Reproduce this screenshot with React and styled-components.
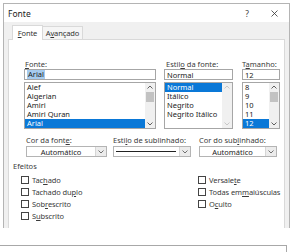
import styled, { createGlobalStyle } from "styled-components";

const GlobalStyle = createGlobalStyle`
  body {
    margin: 0;
    background: #fff;
    font-family: "Noto Sans", "Open Sans", sans-serif;
    color: #333;
  }
`

const Page = styled.div`
  width: 298px;
  height: 252px;
  overflow: hidden;
`

const Window = styled.div`
  box-sizing: border-box;
  width: 287px;
  height: 225px;
  margin: 3px 0 0 3px;
  border: 1px solid #b4b4b4;
  border-bottom: none;
  display: flex;
  flex-direction: column;
`

const TitleBar = styled.div`
  height: 18px;
  display: flex;
  align-items: center;
  padding: 0 10px 0 4px;
  background: #fff;
  font-size: 8.5px;
  color: #222;
`

const Title = styled.span`
  flex: 1;
`

const TitleButton = styled.span`
  width: 10px;
  display: flex;
  justify-content: center;
  margin-left: ${props => props.gap || 0}px;
  color: #444;
`

const Body = styled.div`
  flex: 1;
  background: #f0f0f0;
  padding: 3px 4px 0 4px;
  display: flex;
  flex-direction: column;
`

const TabRow = styled.div`
  display: flex;
  height: 15px;
  padding-left: 4px;
  margin-bottom: -1px;
  position: relative;
  z-index: 1;
`

const Tab = styled.div`
  box-sizing: border-box;
  width: ${props => props.width}px;
  height: ${props => props.active ? 15 : 14}px;
  margin-top: ${props => props.active ? 0 : 1}px;
  display: flex;
  align-items: center;
  justify-content: center;
  font-size: 7.5px;
  letter-spacing: -0.1px;
  background: ${props => props.active ? "#fff" : "#f5f5f5"};
  border: 1px solid #d9d9d9;
  border-bottom: ${props => props.active ? "none" : "1px solid #d9d9d9"};
  border-left: ${props => props.active ? "1px solid #d9d9d9" : "none"};
  color: #333;
`

const Panel = styled.div`
  flex: 1;
  background: #fff;
  border: 1px solid #d9d9d9;
  border-bottom: none;
  padding: 20px 0 0 4px;
`

const FontGrid = styled.div`
  display: grid;
  grid-template-columns: 132px 69px 39px;
  column-gap: 8px;
  margin-left: 11px;
  & > div:nth-child(3) { margin-left: 1px; }
`

const Field = styled.div`
  display: flex;
  flex-direction: column;
`

const Label = styled.div`
  height: 9px;
  line-height: 9px;
  font-size: 7.5px;
  color: #3a3a3a;
  padding-left: ${props => props.indent || 0}px;
  white-space: nowrap;
`

const TextBox = styled.div`
  box-sizing: border-box;
  height: 11px;
  border: 1px solid #a6a6a6;
  display: flex;
  align-items: center;
  padding-left: 2px;
  font-size: 7.5px;
  color: #222;
`

const Selected = styled.span`
  background: #a6cbee;
  padding: 0 1px;
  line-height: 9px;
`

const ListBox = styled.div`
  box-sizing: border-box;
  height: 47px;
  margin-top: 2px;
  border: 1px solid #a6a6a6;
  display: flex;
`

const Items = styled.div`
  flex: 1;
  display: flex;
  flex-direction: column;
`

const Item = styled.div`
  height: 9px;
  line-height: 9px;
  font-size: 7.5px;
  padding-left: 2px;
  white-space: nowrap;
  background: ${props => props.selected ? "#0a78d7" : "transparent"};
  color: ${props => props.selected ? "#fff" : "#222"};
`

const ScrollBar = styled.div`
  width: 10px;
  background: #f0f0f0;
  display: flex;
  flex-direction: column;
  align-items: center;
  justify-content: space-between;
  padding: 2px 0;
  box-sizing: border-box;
`

const Thumb = styled.div`
  width: 8px;
  height: 10px;
  background: #c2c2c2;
  margin-bottom: auto;
  margin-top: 3px;
`

const StyleRow = styled.div`
  display: grid;
  grid-template-columns: 81px 78px 80px;
  column-gap: 6px;
  margin: 7px 0 0 13px;
  & > div:nth-child(3) { margin-left: 2px; }
`

const Combo = styled.div`
  box-sizing: border-box;
  height: 11px;
  margin-top: 1px;
  border: 1px solid #b4b4b4;
  display: flex;
  background: #fff;
`

const ComboValue = styled.div`
  flex: 1;
  display: flex;
  align-items: center;
  justify-content: center;
  font-size: 7.5px;
  color: #222;
`

const LinePreview = styled.div`
  flex: 1;
  height: 1px;
  align-self: center;
  background: #222;
  margin: 0 3px 0 2px;
`

const ComboButton = styled.div`
  width: 10px;
  background: #ececec;
  border-left: 1px solid #d6d6d6;
  display: flex;
  align-items: center;
  justify-content: center;
`

const SectionTitle = styled.div`
  margin-top: 5px;
  height: 9px;
  line-height: 9px;
  font-size: 7.5px;
  color: #3a3a3a;
`

const Effects = styled.div`
  display: grid;
  grid-template-columns: 177px auto;
  grid-auto-rows: 12px;
  margin: 3px 0 0 8px;
`

const Check = styled.div`
  display: flex;
  align-items: center;
  font-size: 7.5px;
  letter-spacing: -0.1px;
  color: #3a3a3a;
  white-space: nowrap;
  grid-column: ${props => props.col};
  grid-row: ${props => props.row};
`

const Box = styled.span`
  box-sizing: border-box;
  width: 8px;
  height: 8px;
  border: 1px solid #444;
  background: #fff;
  margin-right: 3px;
`

const LowerWindow = styled.div`
  box-sizing: border-box;
  width: 287px;
  height: 8px;
  margin-top: 17px;
  border-top: 1px solid #a8a8a8;
  border-right: 1px solid #a8a8a8;
`

const Chevron = ({ up, color = "#707070" }) => (
  <svg width="6" height="4" viewBox="0 0 6 4">
    <path d={up ? "M0.5 3.5 L3 1 L5.5 3.5" : "M0.5 0.5 L3 3 L5.5 0.5"} fill="none" stroke={color} strokeWidth="1" />
  </svg>
)

const u = (text, i) => <>{text.slice(0, i)}<span style={{ textDecoration: "underline" }}>{text[i]}</span>{text.slice(i + 1)}</>

function List({ items, selected, disabled }) {
  return <ListBox>
    <Items>
      {items.map(item => <Item key={item} selected={item === selected}>{item}</Item>)}
    </Items>
    <ScrollBar>
      <Chevron up color={disabled ? "#c8c8c8" : "#606060"} />
      {!disabled && <Thumb />}
      <Chevron color={disabled ? "#c8c8c8" : "#606060"} />
    </ScrollBar>
  </ListBox>
}

export default function App() {
  return <>
    <GlobalStyle />
    <Page>
      <Window>
        <TitleBar>
          <Title>Fonte</Title>
          <TitleButton>?</TitleButton>
          <TitleButton gap={17}>
            <svg width="7" height="7" viewBox="0 0 7 7">
              <path d="M0.5 0.5 L6.5 6.5 M6.5 0.5 L0.5 6.5" stroke="#333" strokeWidth="0.8" />
            </svg>
          </TitleButton>
        </TitleBar>
        <Body>
          <TabRow>
            <Tab active width={31}>{u("Fonte", 0)}</Tab>
            <Tab width={40}>{u("Avançado", 1)}</Tab>
          </TabRow>
          <Panel>
            <FontGrid>
              <Field>
                <Label indent={1}>{u("Fonte:", 0)}</Label>
                <TextBox><Selected>Arial</Selected></TextBox>
                <List items={["Alef", "Algerian", "Amiri", "Amiri Quran", "Arial"]} selected="Arial" />
              </Field>
              <Field>
                <Label indent={2}>{u("Estilo da fonte:", 5)}</Label>
                <TextBox>Normal</TextBox>
                <List items={["Normal", "Itálico", "Negrito", "Negrito Itálico"]} selected="Normal" disabled />
              </Field>
              <Field>
                <Label>{u("Tamanho:", 1)}</Label>
                <TextBox>12</TextBox>
                <List items={["8", "9", "10", "11", "12"]} selected="12" />
              </Field>
            </FontGrid>
            <StyleRow>
              <Field>
                <Label>{u("Cor da fonte:", 11)}</Label>
                <Combo>
                  <ComboValue>Automático</ComboValue>
                  <ComboButton><Chevron /></ComboButton>
                </Combo>
              </Field>
              <Field>
                <Label>{u("Estilo de sublinhado:", 4)}</Label>
                <Combo>
                  <LinePreview />
                  <ComboButton><Chevron /></ComboButton>
                </Combo>
              </Field>
              <Field>
                <Label>{u("Cor do sublinhado:", 10)}</Label>
                <Combo>
                  <ComboValue>Automático</ComboValue>
                  <ComboButton><Chevron /></ComboButton>
                </Combo>
              </Field>
            </StyleRow>
            <SectionTitle>Efeitos</SectionTitle>
            <Effects>
              <Check col={1} row={1}><Box />{u("Tachado", 3)}</Check>
              <Check col={1} row={2}><Box />{u("Tachado duplo", 10)}</Check>
              <Check col={1} row={3}><Box />{u("Sobrescrito", 3)}</Check>
              <Check col={1} row={4}><Box />{u("Subscrito", 1)}</Check>
              <Check col={2} row={1}><Box />{u("Versalete", 7)}</Check>
              <Check col={2} row={2}><Box />{u("Todas em maiúsculas", 9)}</Check>
              <Check col={2} row={3}><Box />{u("Oculto", 1)}</Check>
            </Effects>
          </Panel>
        </Body>
      </Window>
      <LowerWindow />
    </Page>
  </>
}
